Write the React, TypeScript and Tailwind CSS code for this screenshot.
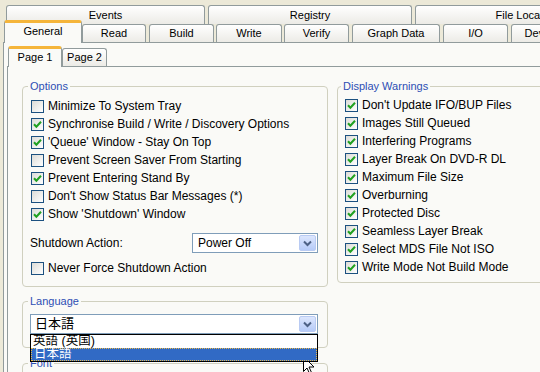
import React from 'react';

const options: [string, boolean][] = [
  ['Minimize To System Tray', false],
  ['Synchronise Build / Write / Discovery Options', true],
  ["'Queue' Window - Stay On Top", true],
  ['Prevent Screen Saver From Starting', false],
  ['Prevent Entering Stand By', true],
  ["Don't Show Status Bar Messages (*)", false],
  ["Show 'Shutdown' Window", true],
];

const warnings = [
  "Don't Update IFO/BUP Files",
  'Images Still Queued',
  'Interfering Programs',
  'Layer Break On DVD-R DL',
  'Maximum File Size',
  'Overburning',
  'Protected Disc',
  'Seamless Layer Break',
  'Select MDS File Not ISO',
  'Write Mode Not Build Mode',
];

const CheckBox = ({ checked }: { checked: boolean }) => (
  <span className="w-[13px] h-[13px] shrink-0 border border-[#1C5180] bg-gradient-to-br from-[#DCDCD7] to-white flex items-center justify-center">
    {checked && (
      <svg width="9" height="9" viewBox="0 0 9 9">
        <path d="M1 4.2 L3.4 6.8 L8 1.8" stroke="#21A121" strokeWidth="2" fill="none" />
      </svg>
    )}
  </span>
);

const CheckRow = ({ label, checked }: { label: string; checked: boolean }) => (
  <div className="h-[18px] flex items-center gap-[4px] text-[12px]">
    <CheckBox checked={checked} />
    <span className="whitespace-nowrap">{label}</span>
  </div>
);

const DropButton = () => (
  <span className="w-[17px] h-[16px] shrink-0 rounded-[2px] border border-[#B9CBF3] bg-gradient-to-b from-[#DCE6FD] to-[#B6CBF8] flex items-center justify-center">
    <svg width="9" height="7" viewBox="0 0 9 7">
      <path d="M1 1.5 L4.5 5 L8 1.5" stroke="#4D6185" strokeWidth="2" fill="none" />
    </svg>
  </span>
);

const BackTab = ({ label, cls }: { label: string; cls: string }) => (
  <div
    className={`h-[19px] -mb-[2px] shrink-0 rounded-t-[3px] border border-b-0 border-[#919B9C] bg-gradient-to-b from-white to-[#ECEBE6] text-center pt-[3px] leading-[13px] whitespace-nowrap ${cls}`}
  >
    {label}
  </div>
);

const FrontTab = ({ label, cls }: { label: string; cls: string }) => (
  <div
    className={`h-[18px] shrink-0 rounded-t-[3px] border border-b-0 border-[#919B9C] bg-gradient-to-b from-white to-[#ECEBE6] flex items-center justify-center whitespace-nowrap ${cls}`}
  >
    {label}
  </div>
);

const Cursor = () => (
  <svg className="absolute left-[303px] top-[356px]" width="12" height="19" viewBox="0 0 12 19">
    <path d="M0.5 0.5 L0.5 15.5 L4 12 L6.5 17.5 L8.5 16.5 L6 11 L11 11 Z" fill="white" stroke="black" strokeWidth="1" />
  </svg>
);

export default function App() {
  return (
    <div className="relative w-[540px] h-[372px] overflow-hidden bg-[#ECE9D8] pt-[5px] text-[11px] text-black font-['Liberation_Sans','Noto_Sans_CJK_JP',sans-serif]">
      {/* back row of tabs */}
      <div className="flex pl-[6px] gap-[3px]">
        <BackTab label="Events" cls="w-[199px]" />
        <BackTab label="Registry" cls="w-[204px]" />
        <BackTab label="File Locations" cls="w-[229px]" />
      </div>

      {/* front row of tabs */}
      <div className="relative z-10 flex items-end h-[20px] pl-[4px]">
        <div className="h-[23px] -mb-[1px] w-[78px] shrink-0 rounded-t-[3px] border-x border-t-[3px] border-x-[#919B9C] border-t-[#F5B53A] bg-[#FAFAF7] flex items-center justify-center pb-[3px]">
          General
        </div>
        <FrontTab label="Read" cls="w-[64px] ml-[0px]" />
        <FrontTab label="Build" cls="w-[65px] ml-[3px]" />
        <FrontTab label="Write" cls="w-[66px] ml-[2px]" />
        <FrontTab label="Verify" cls="w-[65px] ml-[2px]" />
        <FrontTab label="Graph Data" cls="w-[88px] ml-[3px]" />
        <FrontTab label="I/O" cls="w-[65px] ml-[3px]" />
        <FrontTab label="Development" cls="w-[92px] ml-[3px]" />
      </div>

      {/* outer page */}
      <div className="ml-[3px] h-[340px] border-l border-t border-[#919B9C] bg-[#FAFAF7] pt-[3px]">
        <div className="ml-[3px]">
          {/* inner tabs */}
          <div className="relative z-10 flex items-end h-[20px] pl-[1px]">
            <div className="h-[21px] -mb-[1px] w-[54px] shrink-0 rounded-t-[3px] border-x border-t-[3px] border-x-[#919B9C] border-t-[#F5B53A] bg-[#FAFAF7] flex items-center justify-center pb-[2px]">
              Page 1
            </div>
            <FrontTab label="Page 2" cls="h-[17px] w-[45px]" />
          </div>

          {/* inner page */}
          <div className="h-[320px] border-l border-t border-[#919B9C] bg-[#FAFAF7] pl-[14px] pt-[12px] flex">
            <div className="w-[306px] shrink-0 flex flex-col">
              <fieldset className="border border-[#D0D0BF] rounded-[4px]">
                <legend className="ml-[5px] px-[2px] leading-[14px] text-[#2D4EB4]">Options</legend>
                <div className="pl-[8px] pt-[4px] pb-[9px]">
                  {options.map(([label, checked]) => (
                    <CheckRow key={label} label={label} checked={checked} />
                  ))}
                  <div className="mt-[10px] h-[20px] flex items-center -ml-[1px] text-[12px]">
                    <span className="w-[162px] shrink-0">Shutdown Action:</span>
                    <div className="w-[126px] h-[20px] border border-[#7F9DB9] bg-white flex items-center pl-[5px] pr-[1px]">
                      <span className="flex-1">Power Off</span>
                      <DropButton />
                    </div>
                  </div>
                  <div className="mt-[6px]">
                    <CheckRow label="Never Force Shutdown Action" checked={false} />
                  </div>
                </div>
              </fieldset>

              <fieldset className="mt-[7px] border border-[#D0D0BF] rounded-[4px]">
                <legend className="ml-[5px] px-[2px] leading-[14px] text-[#2D4EB4]">Language</legend>
                <div className="pl-[7px] pt-[6px] pb-[13px]">
                  <div className="relative z-20 w-[288px]">
                    <div className="h-[20px] border border-[#7F9DB9] bg-white flex items-center pl-[4px] pr-[1px]">
                      <span className="flex-1 text-[13px]">日本語</span>
                      <DropButton />
                    </div>
                    <div className="absolute left-0 top-full w-full border border-black bg-white text-[12.5px]">
                      <div className="h-[13px] leading-[13px] pl-[2px] whitespace-nowrap">英語 (英国)</div>
                      <div className="h-[13px] leading-[11px] pl-[2px] bg-[#316AC5] text-white border border-dotted border-[#E8B84A] whitespace-nowrap">
                        日本語
                      </div>
                    </div>
                  </div>
                </div>
              </fieldset>

              <fieldset className="mt-[8px] h-[40px] border border-[#D0D0BF] rounded-[4px]">
                <legend className="ml-[5px] px-[2px] leading-[14px] text-[#2D4EB4]">Font</legend>
              </fieldset>
            </div>

            <div className="ml-[9px] w-[306px] shrink-0">
              <fieldset className="border border-[#D0D0BF] rounded-[4px]">
                <legend className="ml-[3px] px-[2px] leading-[14px] text-[#2D4EB4]">Display Warnings</legend>
                <div className="pl-[7px] pt-[3px] pb-[6px]">
                  {warnings.map((w) => (
                    <CheckRow key={w} label={w} checked={true} />
                  ))}
                </div>
              </fieldset>
            </div>
          </div>
        </div>
      </div>

      <Cursor />
    </div>
  );
}
